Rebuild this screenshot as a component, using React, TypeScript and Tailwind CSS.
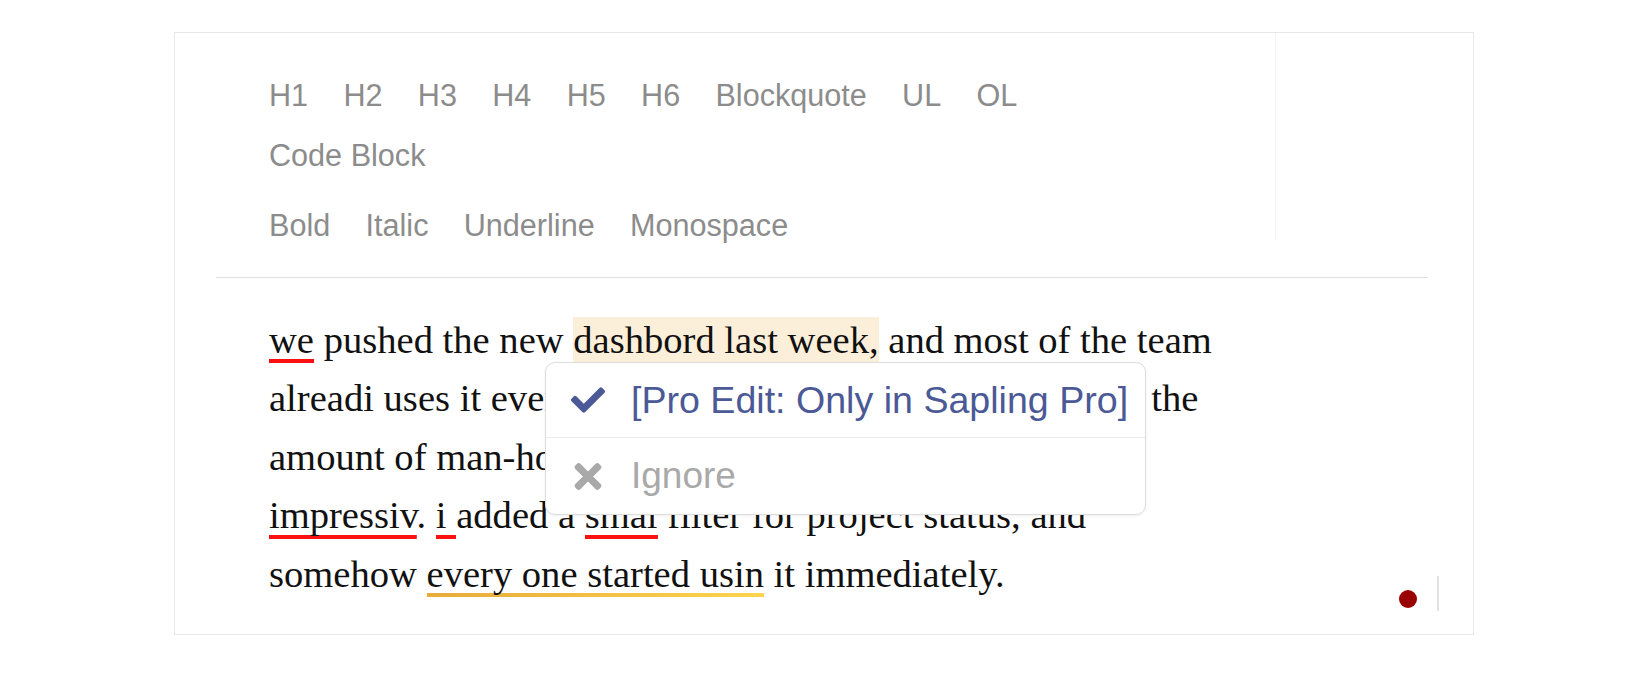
import { FaCheck, FaTimes } from 'react-icons/fa';

const blockItems = ['H1', 'H2', 'H3', 'H4', 'H5', 'H6', 'Blockquote', 'UL', 'OL', 'Code Block'];
const inlineItems = ['Bold', 'Italic', 'Underline', 'Monospace'];

const Err = ({ children }: { children: React.ReactNode }) => (
  <span className="bg-[linear-gradient(#ff1010,#ff1010)] bg-no-repeat bg-bottom bg-[length:100%_4px] pb-[2.5px]">
    {children}
  </span>
);

const Warn = ({ children }: { children: React.ReactNode }) => (
  <span className="bg-[linear-gradient(90deg,#e8ab3a,#fdd44e)] bg-no-repeat bg-bottom bg-[length:100%_4px] pb-[2px]">
    {children}
  </span>
);

const App = () => {
  return (
    <div className="w-[1650px] h-[673px] bg-white pt-[32px] pl-[174px]">
      <div className="relative w-[1300px] h-[603px] border border-[#e8e8e8] bg-white">
        <div className="flex h-[208px]">
          <div className="w-[1101px] h-full border-r border-[#f4f4f4] pl-[94px] pt-[32px] font-['Liberation_Sans',Arial,sans-serif] text-[30.6px] leading-[60px] text-[#8c8c8c]">
            <div className="flex flex-wrap w-[800px] gap-x-[35.3px]">
              {blockItems.map((item) => (
                <span key={item} className="cursor-pointer">
                  {item}
                </span>
              ))}
            </div>
            <div className="flex gap-x-[35.3px] mt-[9.5px]">
              {inlineItems.map((item) => (
                <span key={item} className="cursor-pointer">
                  {item}
                </span>
              ))}
            </div>
          </div>
        </div>

        <div className="mt-[36px] ml-[40.5px] w-[1212px] h-px bg-[#e2e2e2]" />

        <p className="mt-[32.5px] pl-[94px] whitespace-nowrap font-['Liberation_Serif','Times_New_Roman',serif] text-[38.6px] leading-[58.6px] text-[#111]">
          <Err>we</Err> pushed the new <span className="bg-[#fcefda] py-[2px]">dashbord last week,</span> and most of the team
          <br />
          alreadi uses it every singel day. honestly i did not expect <span className="ml-[2px]">the</span>
          <br />
          amount of man-hours it saved us was realy
          <br />
          <Err>impressiv</Err>. <Err>i </Err>added a <Err>smal</Err> filter for project status, and
          <br />
          somehow <Warn>every one started usin</Warn> it immediately.
        </p>

        <div className="absolute left-[370px] top-[329px] w-[601px] rounded-[10px] border border-[#dcdcdc] bg-white shadow-[0_1px_3px_rgba(0,0,0,0.06)] font-['Liberation_Sans',Arial,sans-serif] text-[37px]">
          <div className="flex items-center h-[75px] pl-[25px] border-b border-[#ececec] text-[#4b5996]">
            <span className="flex w-[34px] justify-center">
              <FaCheck size={34} />
            </span>
            <span className="ml-[26px] text-[37.6px]">[Pro Edit: Only in Sapling Pro]</span>
          </div>
          <div className="flex items-center h-[76px] pl-[25px] text-[#a9a9a9]">
            <span className="flex w-[34px] justify-center">
              <FaTimes size={39} />
            </span>
            <span className="ml-[26px]">Ignore</span>
          </div>
        </div>

        <div className="absolute right-[34px] bottom-[23px] flex items-end gap-[20px]">
          <span className="mb-[3px] w-[18px] h-[18px] rounded-full bg-[#990000]" />
          <span className="w-[2px] h-[35px] bg-[#e2e2e2]" />
        </div>
      </div>
    </div>
  );
};

export default App;
